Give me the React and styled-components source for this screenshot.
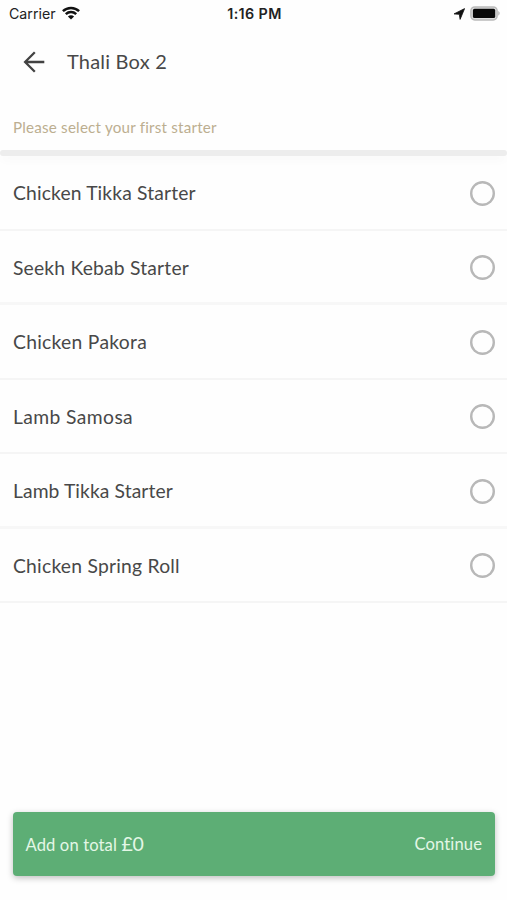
import React from 'react';
import styled, { createGlobalStyle } from 'styled-components';

const GlobalStyle = createGlobalStyle`
  * { box-sizing: border-box; }
  body { margin: 0; background: #fefefe; }
`;

const Screen = styled.main`
  display: flex;
  flex-direction: column;
  width: 100%;
  height: 900px;
  overflow: hidden;
  background: #fefefe;
  color: #484848;
  font-family: Lato, sans-serif;
  font-variant-ligatures: none;
`;

const StatusBar = styled.div`
  display: grid;
  grid-template-columns: 1fr auto 1fr;
  align-items: center;
  height: 28px;
  padding: 0 7px 0 9px;
  color: #222;
  font: 400 14.2px/28px Inter, sans-serif;
`;

const StatusGroup = styled.div`
  display: flex;
  align-items: center;
  justify-content: ${(p) => (p.$end ? 'flex-end' : 'flex-start')};
  gap: ${(p) => (p.$end ? '5px' : '6px')};
  height: 28px;
  padding-bottom: ${(p) => (p.$end ? '1px' : '0')};
`;

const Clock = styled.time`
  font-size: 14.3px;
  font-weight: 600;
  letter-spacing: 0.4px;
`;

const Icon = styled.svg`
  display: block;
  flex: none;
`;

const WifiGlyph = styled(Icon)`
  margin-bottom: 2px;
`;

const Header = styled.header`
  display: flex;
  align-items: center;
  height: 68px;
  padding: 0 0 0 22px;
`;

const BackButton = styled.button`
  display: flex;
  margin: 0 21px 0 0;
  padding: 0;
  border: 0;
  background: none;
`;

const Title = styled.h1`
  margin: 0;
  padding-bottom: 2px;
  font-size: 20px;
  font-weight: 400;
  line-height: 28px;
  letter-spacing: ${(p) => p.$tracking}px;
`;

const Prompt = styled.p`
  height: 54px;
  margin: 0;
  padding: 20px 13px 0;
  color: #bcae90;
  font-size: 15.2px;
  line-height: 22px;
  letter-spacing: ${(p) => p.$tracking}px;
`;

const Divider = styled.div`
  flex: none;
  height: 6px;
  border-radius: 3px;
  background: #ededed;
  box-shadow: 0 5px 8px -1px rgba(0, 0, 0, 0.035);
`;

const Options = styled.ul`
  display: grid;
  grid-template-rows: repeat(6, 74.5px);
  margin: 0;
  padding: 0;
  list-style: none;
`;

const Option = styled.li`
  display: flex;
  align-items: center;
  justify-content: space-between;
  padding: ${(p) => (p.$thick ? '3px' : '1.5px')} 12px 0 13px;
  border-bottom: ${(p) => (p.$thick ? '3px solid #f7f7f7' : '2px solid #f5f5f5')};
`;

const Label = styled.span`
  font-size: 19.3px;
  line-height: 26px;
  white-space: nowrap;
  letter-spacing: ${(p) => p.$tracking}px;
`;

const Radio = styled.button`
  width: 25px;
  height: 25px;
  padding: 0;
  border: 0;
  border-radius: 50%;
  background: #fefefe;
  box-shadow: inset 0 0 0 2.4px #b8b8b8;
`;

const ActionBar = styled.footer`
  display: flex;
  align-items: center;
  justify-content: space-between;
  height: 64px;
  margin: auto 12px 24px 13px;
  padding: 0 13px 0 12.5px;
  border-radius: 4px;
  background: #5dae75;
  box-shadow: 0 2px 6px rgba(0, 0, 0, 0.25);
  color: #e4f7e6;
  font-size: 16.6px;
`;

const Total = styled.span`
  line-height: 26px;
  letter-spacing: ${(p) => p.$tracking}px;
`;

const Price = styled.span`
  font-size: 19.5px;
  letter-spacing: -0.3px;
`;

const Continue = styled.button`
  padding: 0;
  border: 0;
  background: none;
  color: inherit;
  font: inherit;
  line-height: 26px;
  letter-spacing: ${(p) => p.$tracking}px;
`;

const starters = [
  { name: 'Chicken Tikka Starter', tracking: 0.14 },
  { name: 'Seekh Kebab Starter', tracking: 0.2, thick: true },
  { name: 'Chicken Pakora', tracking: 0.28 },
  { name: 'Lamb Samosa', tracking: 0.4 },
  { name: 'Lamb Tikka Starter', tracking: 0.09, thick: true },
  { name: 'Chicken Spring Roll', tracking: 0.23 },
];

function WifiIcon() {
  return (
    <WifiGlyph width="18" height="14" viewBox="0 0 18 14" fill="none" stroke="#111" strokeWidth="2.5">
      <path d="M.9 5.1C5.4.8 12.6.8 17.1 5.1M3.8 8.2C6.8 5.4 11.2 5.4 14.2 8.2" />
      <path d="M9 13.5 5.9 10.5C7.7 8.9 10.3 8.9 12.1 10.5Z" fill="#111" stroke="none" />
    </WifiGlyph>
  );
}

function LocationIcon() {
  return (
    <Icon width="12" height="12" viewBox="0 0 12 12">
      <path d="M11.6.6 7.1 11.4 6.3 6.3 1 5.9Z" fill="#111" stroke="#111" strokeWidth=".8" strokeLinejoin="round" />
    </Icon>
  );
}

function BatteryIcon() {
  return (
    <Icon width="30" height="15" viewBox="0 0 30 15">
      <rect x=".9" y=".9" width="26.2" height="13" rx="3.8" fill="#ddd" stroke="#bbb" strokeWidth="1.5" />
      <rect x="2.9" y="2.8" width="22.3" height="9.2" rx="1.6" fill="#080808" />
      <path d="M28.2 5v4.6c2-.9 2-3.7 0-4.6Z" fill="#bbb" />
    </Icon>
  );
}

function BackIcon() {
  return (
    <Icon width="24" height="24" viewBox="0 0 24 24" fill="none" stroke="#424242" strokeWidth="2.3">
      <path d="M12.8 2.2 3.1 12l9.7 9.8M3.1 12h19.2" />
    </Icon>
  );
}

export default function App() {
  return (
    <>
      <GlobalStyle />
      <Screen>
        <StatusBar>
          <StatusGroup><span>Carrier</span><WifiIcon /></StatusGroup>
          <Clock>1:16 PM</Clock>
          <StatusGroup $end><LocationIcon /><BatteryIcon /></StatusGroup>
        </StatusBar>
        <Header>
          <BackButton aria-label="Back"><BackIcon /></BackButton>
          <Title $tracking={0.2}>Thali Box 2</Title>
        </Header>
        <Prompt $tracking={0.2}>Please select your first starter</Prompt>
        <Divider />
        <Options>
          {starters.map(({ name, tracking, thick }) => (
            <Option key={name} $thick={thick}>
              <Label $tracking={tracking}>{name}</Label>
              <Radio role="radio" aria-checked="false" aria-label={name} />
            </Option>
          ))}
        </Options>
        <ActionBar>
          <Total $tracking={0.12}>Add on total <Price>£0</Price></Total>
          <Continue $tracking={0.1}>Continue</Continue>
        </ActionBar>
      </Screen>
    </>
  );
}
